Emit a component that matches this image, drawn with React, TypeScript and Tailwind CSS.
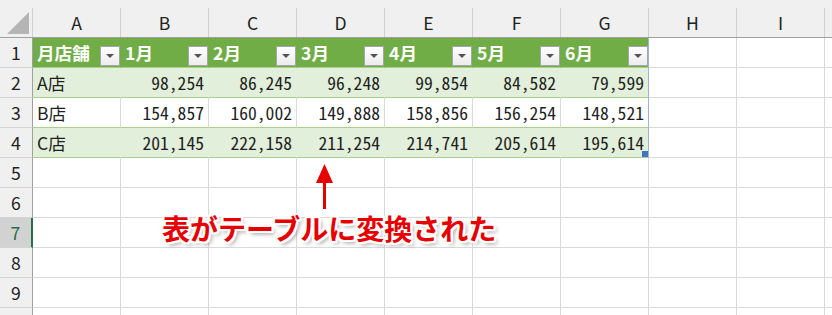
import React from 'react';

const COLS = ['A', 'B', 'C', 'D', 'E', 'F', 'G', 'H', 'I'];
const HEAD = ['月店舗', '1月', '2月', '3月', '4月', '5月', '6月'];
const DATA = [
  ['A店', '98,254', '86,245', '96,248', '99,854', '84,582', '79,599'],
  ['B店', '154,857', '160,002', '149,888', '158,856', '156,254', '148,521'],
  ['C店', '201,145', '222,158', '211,254', '214,741', '205,614', '195,614'],
];

function FilterButton() {
  return (
    <div className="ml-auto mt-[8px] flex h-[20px] w-[20px] shrink-0 items-center justify-center border border-[#a6a6a6] bg-gradient-to-b from-[#ffffff] to-[#ececec]">
      <svg width="8" height="4" viewBox="0 0 8 4">
        <path d="M0 0h8L4 4z" fill="#555" />
      </svg>
    </div>
  );
}

function RowHead({ n, selected }: { n?: number; selected?: boolean }) {
  return (
    <div
      className={`flex w-[33px] shrink-0 items-center justify-center border-b border-b-[#d4d4d4] ${
        selected
          ? 'border-r-2 border-r-[#217346] bg-[#d2d2d2] text-[#217346]'
          : 'border-r border-r-[#a0a0a0] bg-[#f0f0f0]'
      }`}
    >
      {n}
    </div>
  );
}

function Blank() {
  return <div className="w-[88px] shrink-0 border-b border-r border-[#d9d9d9]" />;
}

export default function App() {
  return (
    <div className="relative h-[315px] w-[832px] overflow-hidden bg-white font-['Noto_Sans_CJK_JP',sans-serif] text-[17.6px] leading-none text-[#1f1f1f]">
      {/* column letters */}
      <div className="flex h-[38px] border-b border-[#a0a0a0] bg-[#f0f0f0]">
        <div className="relative mt-[8px] w-[33px] shrink-0 border-r border-[#d0d0d0]">
          <svg className="absolute left-[7px] top-[4px]" width="22" height="22" viewBox="0 0 22 22">
            <path d="M22 0v22H0z" fill="#b5b5b5" />
          </svg>
        </div>
        {COLS.map((c) => (
          <div
            key={c}
            className="mt-[8px] flex w-[88px] shrink-0 items-center justify-center border-r border-[#d0d0d0] text-[#222]"
          >
            {c}
          </div>
        ))}
        <div className="flex-1" />
      </div>

      {/* row 1 - table header */}
      <div className="flex h-[30px]">
        <RowHead n={1} />
        {HEAD.map((h, i) => (
          <div
            key={h}
            className={`flex w-[88px] shrink-0 border-b border-b-[#a9d08e] bg-[#70ad47] pl-[4px] ${
              i === 6 ? 'border-r border-r-[#9db4df]' : 'border-r border-r-[#70ad47]'
            }`}
          >
            <span className="self-center font-bold text-white">{h}</span>
            <FilterButton />
          </div>
        ))}
        <Blank />
        <Blank />
        <div className="flex-1 border-b border-[#d9d9d9]" />
      </div>

      {/* rows 2-4 - data */}
      {DATA.map((row, r) => {
        const green = r !== 1;
        return (
          <div key={r} className="flex h-[30px]">
            <RowHead n={r + 2} />
            {row.map((v, i) => (
              <div
                key={i}
                className={`relative flex w-[88px] shrink-0 items-center border-b border-b-[#a9d08e] px-[4px] ${
                  green ? 'bg-[#e2efda]' : 'bg-white'
                } ${i === 0 ? 'justify-start' : "justify-end [font-feature-settings:'hwid']"} ${
                  i === 6 ? 'border-r border-r-[#9db4df]' : green ? 'border-r border-r-[#e2efda]' : 'border-r border-r-[#d9d9d9]'
                }`}
              >
                {v}
                {r === 2 && i === 6 && (
                  <div className="absolute bottom-[0px] right-[0px] h-[6px] w-[6px] bg-[#4472c4]" />
                )}
              </div>
            ))}
            <Blank />
            <Blank />
            <div className="flex-1 border-b border-[#d9d9d9]" />
          </div>
        );
      })}

      {/* rows 5-10 - empty */}
      {[5, 6, 7, 8, 9, 10].map((n) => (
        <div key={n} className="flex h-[30px]">
          <RowHead n={n < 10 ? n : undefined} selected={n === 7} />
          {COLS.map((c) => (
            <Blank key={c} />
          ))}
          <div className="flex-1 border-b border-[#d9d9d9]" />
        </div>
      ))}

      {/* annotation */}
      <svg className="absolute left-[315px] top-[164px]" width="19" height="46" viewBox="0 0 19 46">
        <path d="M9.5 0L18 19H11V45H8V19H1z" fill="#e60000" />
      </svg>
      <div className="absolute left-[162px] top-[214px] text-[28px] font-bold leading-none text-[#e60000] [text-shadow:2px_0_0_#fff,-2px_0_0_#fff,0_2px_0_#fff,0_-2px_0_#fff,2px_2px_0_#fff,-2px_-2px_0_#fff,2px_-2px_0_#fff,-2px_2px_0_#fff,3px_3px_4px_rgba(0,0,0,0.4)]">
        表がテーブルに変換された
      </div>
    </div>
  );
}
